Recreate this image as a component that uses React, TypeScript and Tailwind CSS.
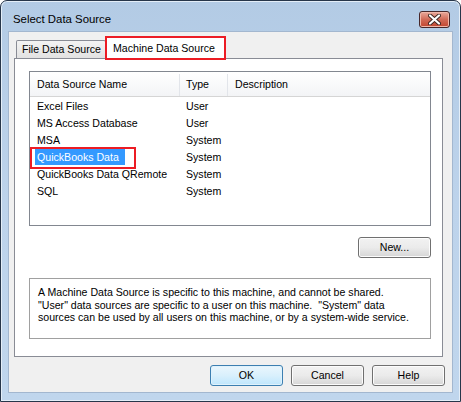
import React from 'react';

const rows = [
  { name: 'Excel Files', type: 'User' },
  { name: 'MS Access Database', type: 'User' },
  { name: 'MSA', type: 'System' },
  { name: 'QuickBooks Data', type: 'System', selected: true },
  { name: 'QuickBooks Data QRemote', type: 'System' },
  { name: 'SQL', type: 'System' },
];

function DialogButton({ label, primary }: { label: string; primary?: boolean }) {
  return (
    <button
      className={`h-[21px] w-[73px] rounded-[3px] border text-[10.6px] leading-none text-black ${
        primary
          ? 'border-[#3c7fb1] bg-gradient-to-b from-[#eaf6fd] via-[#d9f0fc] to-[#bee6fd] shadow-[inset_0_0_0_1px_#dff2fc]'
          : 'border-[#707070] bg-gradient-to-b from-[#f2f2f2] via-[#ebebeb] to-[#d6d6d6] shadow-[inset_0_0_0_1px_#fcfcfc]'
      }`}
    >
      {label}
    </button>
  );
}

export default function App() {
  return (
    <div className="w-[461px] h-[402px] overflow-hidden font-['Liberation_Sans',Arial,sans-serif] text-black">
      <div className="flex h-full w-full flex-col rounded-t-[7px] border border-[#27364a] bg-gradient-to-b from-[#b3cbe5] via-[#bdd3eb] to-[#c0d6ed] shadow-[inset_0_0_0_1px_#e4eef8]">
        {/* Title bar */}
        <div className="flex h-[30px] shrink-0 items-center justify-between pl-[12px] pr-[10px] pt-[7px]">
          <span className="pt-[1px] text-[11.4px]">Select Data Source</span>
          <div className="flex h-[17px] w-[31px] items-center justify-center rounded-[3px] border border-[#47272a] bg-gradient-to-b from-[#e9a99c] via-[#d16a57] to-[#c2442f] shadow-[inset_0_0_0_1px_#f0b7a9]">
            <svg width="13" height="11" viewBox="0 0 13 11">
              <path
                d="M2 1.5 L11 9.5 M11 1.5 L2 9.5"
                stroke="#3b2420"
                strokeWidth="4"
                strokeLinecap="round"
              />
              <path
                d="M2 1.5 L11 9.5 M11 1.5 L2 9.5"
                stroke="#ffffff"
                strokeWidth="2.2"
                strokeLinecap="round"
              />
            </svg>
          </div>
        </div>

        {/* Client area */}
        <div className="mx-[7px] flex h-[362px] flex-col border border-[#a3b7cf] bg-[#f0f0f0] pl-[5px] pt-[4px]">
          {/* Tabs */}
          <div className="flex h-[22px] items-end pl-[2px]">
            <div className="flex h-[18px] w-[90px] items-center rounded-t-[2px] border border-b-0 border-[#898c95] bg-gradient-to-b from-[#f3f3f3] to-[#e2e2e2] pl-[5px] pt-[1px] text-[10.6px]">
              File Data Source
            </div>
            <div className="relative z-10 -mb-px -ml-px flex h-[23px] w-[121px] items-center rounded-t-[2px] border border-b-0 border-[#898c95] bg-white pl-[7px] pt-[1px] text-[10.6px]">
              Machine Data Source
              <div className="absolute -inset-px border-2 border-[#ec1c24]" />
            </div>
          </div>

          {/* Tab panel */}
          <div className="flex h-[299px] w-[429px] flex-col border border-[#898c95] bg-white pl-[14px] pt-[12px]">
            {/* List view */}
            <div className="h-[155px] w-[402px] border border-[#828790] bg-white text-[10.6px]">
              <div className="flex h-[25px] items-center border-b border-[#d5d5d5] bg-gradient-to-b from-white to-[#f3f4f6] pt-[2px]">
                <div className="flex h-full w-[150px] items-center border-r border-[#e2e5ea] pl-[7px]">
                  Data Source Name
                </div>
                <div className="flex h-full w-[48px] items-center border-r border-[#e2e5ea] pl-[6px]">
                  Type
                </div>
                <div className="flex h-full items-center pl-[7px]">Description</div>
              </div>
              <div className="pt-[1px]">
                {rows.map((row) => (
                  <div key={row.name} className="relative flex h-[17px] items-center">
                    <div className="w-[150px] pl-[5px]">
                      <span
                        className={`inline-block px-[2px] leading-[16px] ${
                          row.selected ? 'bg-[#3399ff] pr-[6px] text-white' : ''
                        }`}
                      >
                        {row.name}
                      </span>
                    </div>
                    <div className="w-[48px] pl-[6px]">{row.type}</div>
                    {row.selected && (
                      <div className="absolute left-0 top-[-2px] h-[22px] w-[106px] border-2 border-[#ec1c24]" />
                    )}
                  </div>
                ))}
              </div>
            </div>

            <div className="mt-[11px] flex w-[402px] justify-end">
              <DialogButton label="New..." />
            </div>

            {/* Description */}
            <div className="mt-[20px] h-[61px] w-[402px] whitespace-pre border border-[#a0a0a0] pl-[8px] pt-[7px] text-[10.6px] leading-[12.5px]">
              {'A Machine Data Source is specific to this machine, and cannot be shared.\n"User" data sources are specific to a user on this machine.  "System" data\nsources can be used by all users on this machine, or by a system-wide service.'}
            </div>
          </div>

          {/* Dialog buttons */}
          <div className="mt-[8px] flex justify-end gap-[8px] pr-[7px]">
            <DialogButton label="OK" primary />
            <DialogButton label="Cancel" />
            <DialogButton label="Help" />
          </div>
        </div>
      </div>
    </div>
  );
}
